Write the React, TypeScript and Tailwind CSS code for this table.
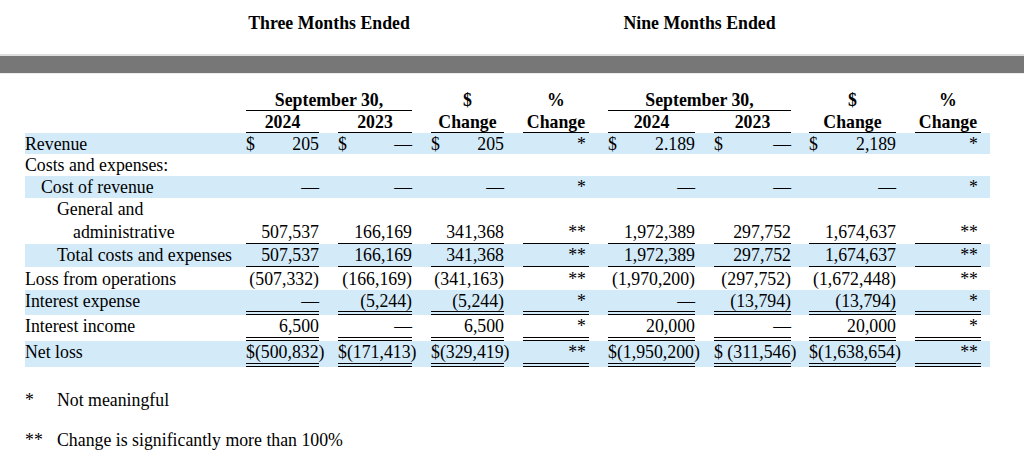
type Val = string | [string, string]

const groupCls = [
  'w-[73px]',
  'ml-[19px] w-[74px]',
  'ml-[19px] w-[73px]',
  'ml-[19px] w-[66px]',
  'ml-[19px] w-[87px]',
  'ml-[19px] w-[77px]',
  'ml-[18px] w-[87px]',
  'ml-[19px] w-[66px]',
]

type RowProps = {
  label: string
  indent?: string
  vals?: Val[]
  line?: 'single' | 'double'
  blue?: boolean
  h: string
}

function Row({ label, indent = '', vals, line, blue, h }: RowProps) {
  const border =
    line === 'single' ? 'border-b border-black' : line === 'double' ? 'border-b-4 border-double border-black' : ''
  const spacer =
    line === 'single' ? 'border-b border-transparent' : line === 'double' ? 'border-b-4 border-transparent' : ''
  return (
    <div className={`ml-[25px] flex w-[965px] ${h} ${blue ? 'bg-[#d3eaf9]' : ''}`}>
      <div className={`flex w-[221px] items-center whitespace-nowrap ${indent} ${spacer}`}>{label}</div>
      {vals?.map((v, i) => {
        const pct = i === 3 || i === 7
        const [sym, num] = typeof v === 'string' ? ['', v] : v
        return (
          <div
            key={i}
            className={`flex h-full items-center justify-between whitespace-nowrap ${groupCls[i]} ${border} ${pct ? 'pr-[3px]' : ''}`}
          >
            <span>{sym}</span>
            <span>{num}</span>
          </div>
        )
      })}
    </div>
  )
}

export default function App() {
  return (
    <div className="h-[462px] w-[1024px] overflow-hidden bg-white text-[17.8px] leading-[20px] text-black [font-family:'Liberation_Serif','Times_New_Roman',serif]">
      {/* period titles */}
      <div className="ml-[246px] flex pt-[13px] font-bold">
        <div className="w-[166px] text-center">Three Months Ended</div>
        <div className="ml-[196px] w-[183px] text-center">Nine Months Ended</div>
      </div>

      <div className="mt-[21px] h-[20px] border-t-2 border-b border-t-[#dedede] border-b-[#ececec] bg-[#777777]" />

      {/* column headers */}
      <div className="mt-[15px] font-bold">
        <div className="ml-[246px] flex h-[22px]">
          <div className="flex w-[166px] items-center justify-center border-b border-black">September 30,</div>
          <div className="ml-[19px] flex w-[73px] items-center justify-center">$</div>
          <div className="ml-[19px] flex w-[66px] items-center justify-center">%</div>
          <div className="ml-[19px] flex w-[183px] items-center justify-center border-b border-black">September 30,</div>
          <div className="ml-[18px] flex w-[87px] items-center justify-center">$</div>
          <div className="ml-[19px] flex w-[66px] items-center justify-center">%</div>
        </div>
        <div className="ml-[246px] flex h-[22px]">
          {['2024', '2023', 'Change', 'Change', '2024', '2023', 'Change', 'Change'].map((t, i) => (
            <div key={i} className={`flex items-center justify-center border-b border-black ${groupCls[i]}`}>
              {t}
            </div>
          ))}
        </div>
      </div>

      <Row
        label="Revenue"
        blue
        h="h-[21px]"
        vals={[['$', '205'], ['$', '—'], ['$', '205'], '*', ['$', '2.189'], ['$', '—'], ['$', '2,189'], '*']}
      />
      <Row label="Costs and expenses:" h="h-[22px]" />
      <Row
        label="Cost of revenue"
        indent="pl-[16px]"
        blue
        h="h-[22px]"
        vals={['—', '—', '—', '*', '—', '—', '—', '*']}
      />
      <Row label="General and" indent="pl-[32px]" h="h-[22px]" />
      <Row
        label="administrative"
        indent="pl-[48px]"
        h="h-[24px]"
        line="single"
        vals={['507,537', '166,169', '341,368', '**', '1,972,389', '297,752', '1,674,637', '**']}
      />
      <Row
        label="Total costs and expenses"
        indent="pl-[32px]"
        blue
        h="h-[23px]"
        line="single"
        vals={['507,537', '166,169', '341,368', '**', '1,972,389', '297,752', '1,674,637', '**']}
      />
      <Row
        label="Loss from operations"
        h="h-[23px]"
        vals={['(507,332)', '(166,169)', '(341,163)', '**', '(1,970,200)', '(297,752)', '(1,672,448)', '**']}
      />
      <Row
        label="Interest expense"
        blue
        h="h-[25px]"
        line="double"
        vals={['—', '(5,244)', '(5,244)', '*', '—', '(13,794)', '(13,794)', '*']}
      />
      <Row
        label="Interest income"
        h="h-[26px]"
        line="double"
        vals={['6,500', '—', '6,500', '*', '20,000', '—', '20,000', '*']}
      />
      <Row
        label="Net loss"
        blue
        h="h-[26px]"
        line="double"
        vals={['$(500,832)', '$(171,413)', '$(329,419)', '**', '$(1,950,200)', '$ (311,546)', '$(1,638,654)', '**']}
      />

      {/* footnotes */}
      <div className="ml-[25px] mt-[23px] flex">
        <span className="w-[32px]">*</span>
        <span>Not meaningful</span>
      </div>
      <div className="ml-[25px] mt-[20px] flex">
        <span className="w-[32px]">**</span>
        <span>Change is significantly more than 100%</span>
      </div>
    </div>
  )
}
